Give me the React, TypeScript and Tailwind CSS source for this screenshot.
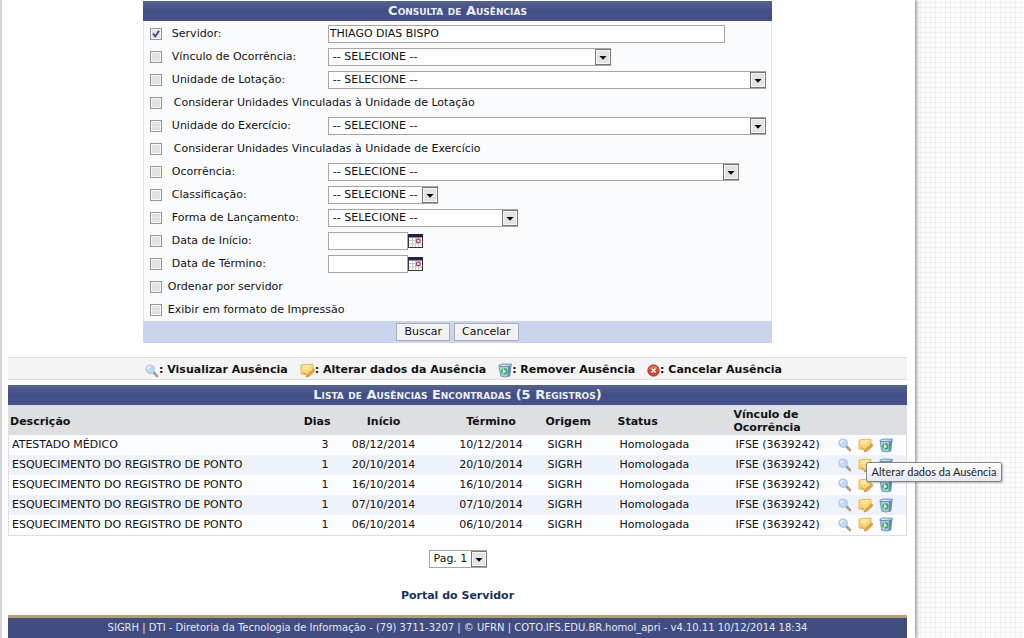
import { useState } from "react";
import type { ReactNode } from "react";

interface Option {
  id: string;
  label: string;
  field?: "text" | "select" | "date";
  width?: string;
  labelClass?: string;
}

const OPTIONS: Option[] = [
  { id: "servidor", label: "Servidor:", field: "text", width: "w-[397px]" },
  { id: "vinculo", label: "Vínculo de Ocorrência:", field: "select", width: "w-[283px]" },
  { id: "lotacao", label: "Unidade de Lotação:", field: "select", width: "w-[438px]" },
  { id: "vinc-lotacao", label: "Considerar Unidades Vinculadas à Unidade de Lotação", labelClass: "ml-3" },
  { id: "exercicio", label: "Unidade do Exercício:", field: "select", width: "w-[438px]" },
  { id: "vinc-exercicio", label: "Considerar Unidades Vinculadas à Unidade de Exercício", labelClass: "ml-3" },
  { id: "ocorrencia", label: "Ocorrência:", field: "select", width: "w-[411px]" },
  { id: "classificacao", label: "Classificação:", field: "select", width: "w-[110px]" },
  { id: "forma", label: "Forma de Lançamento:", field: "select", width: "w-[190px]" },
  { id: "inicio", label: "Data de Início:", field: "date" },
  { id: "termino", label: "Data de Término:", field: "date" },
  { id: "ordenar", label: "Ordenar por servidor", labelClass: "ml-1.5" },
  { id: "impressao", label: "Exibir em formato de Impressão", labelClass: "ml-1.5" },
];

const ABSENCES = [
  { description: "ATESTADO MÉDICO", days: 3, start: "08/12/2014", end: "10/12/2014" },
  { description: "ESQUECIMENTO DO REGISTRO DE PONTO", days: 1, start: "20/10/2014", end: "20/10/2014" },
  { description: "ESQUECIMENTO DO REGISTRO DE PONTO", days: 1, start: "16/10/2014", end: "16/10/2014" },
  { description: "ESQUECIMENTO DO REGISTRO DE PONTO", days: 1, start: "07/10/2014", end: "07/10/2014" },
  { description: "ESQUECIMENTO DO REGISTRO DE PONTO", days: 1, start: "06/10/2014", end: "06/10/2014" },
];

/* Icons */
function ViewIcon() {
  return (
    <svg width="14" height="14" viewBox="0 0 14 14" aria-hidden="true">
      <path d="M8.5 8.5 12 12" stroke="#b99a88" strokeWidth="2.6" strokeLinecap="round" />
      <path d="M8 8 9.4 9.4" stroke="#8b97ab" strokeWidth="2" />
      <circle cx="5.2" cy="5.2" r="4.2" fill="#bfdaf5" stroke="#b3c9e2" strokeWidth="1.2" />
      <path d="M2.8 5.2a2.6 2.6 0 0 1 2.6-2.6" stroke="#f4faff" strokeWidth="1.3" fill="none" />
    </svg>
  );
}

function EditIcon() {
  return (
    <svg width="15" height="15" viewBox="0 0 15 15" aria-hidden="true">
      <path d="M1 2 5 1.4 13 1.2v7L8.5 12.6 5 11.4 1 11z" fill="#f8d873" stroke="#e2b651" strokeWidth="0.9" />
      <path d="M2.5 3.2 11 2.8M2.5 5.4 9 5.2" stroke="#fff0b8" strokeWidth="1.2" />
      <path d="M14 5.8 8 10.6 6 14 9.6 12.9 14.6 8z" fill="#e9a93c" stroke="#b98a48" strokeWidth="0.7" />
      <path d="M3 9 6 11.5" stroke="#c99536" strokeWidth="1" />
    </svg>
  );
}

function RemoveIcon() {
  return (
    <svg width="14" height="15" viewBox="0 0 14 15" aria-hidden="true">
      <path d="M1 2.5 13 2 11.8 13 Q7 15.2 2.6 13z" fill="#a3cbe0" stroke="#648cae" strokeWidth="0.8" />
      <path d="M10 3 13 2.2 11.8 13 9.6 13.8z" fill="#5f8eb5" />
      <path d="M1 2.3 4 1 13.4 1.2 12.6 3 2 3.6z" fill="#d8e9f4" stroke="#527ca3" strokeWidth="0.8" />
      <circle cx="6.2" cy="8.4" r="2.4" fill="#d3f0d6" stroke="#2fa553" strokeWidth="1.5" strokeDasharray="4 1" />
    </svg>
  );
}

function CancelIcon() {
  return (
    <svg width="13" height="13" viewBox="0 0 13 13" aria-hidden="true">
      <circle cx="6.5" cy="6.5" r="5.7" fill="#cf4a33" stroke="#9c3626" strokeWidth="0.8" />
      <path d="M2.6 4.6Q6.5 0.8 10.4 4.6" stroke="#e88b76" strokeWidth="1.2" fill="none" />
      <path d="m4.5 4.5 4 4m0-4-4 4" stroke="#fff" strokeWidth="1.5" />
    </svg>
  );
}

function CalendarIcon() {
  return (
    <svg width="15" height="14" viewBox="0 0 15 14" aria-hidden="true">
      <rect x="0.5" y="0.5" width="14" height="13" fill="#fff" stroke="#3b3542" />
      <rect width="15" height="3.5" fill="#22223f" />
      <path d="M4.5 4v9M7.5 4v9M10.5 4v9M1 6.5h13M1 10h13" stroke="#c9c3cc" strokeWidth="1" />
      <rect x="8.7" y="5.2" width="3.3" height="3.3" fill="#fff" stroke="#b3404a" strokeWidth="1.2" />
    </svg>
  );
}

function Select({ id, label, text, width }: { id: string; label?: string; text: string; width: string }) {
  return (
    <span className={`relative inline-block h-[18px] ${width}`}>
      <select
        id={id}
        aria-label={label}
        className="block h-[18px] w-full appearance-none border border-[#a5a5a5] bg-white pl-1 text-[11px] leading-4 text-[#111]"
      >
        <option>{text}</option>
      </select>
      <svg className="pointer-events-none absolute top-px right-0" width="16" height="16" viewBox="0 0 16 16" aria-hidden="true">
        <rect x="0.5" y="0.5" width="15" height="15" fill="#e3e3e3" stroke="#777" />
        <rect x="1.5" y="1.5" width="13" height="13" fill="none" stroke="#f8f8f8" />
        <path d="M4.5 7h7L8 10.7z" fill="#000" />
      </svg>
    </span>
  );
}

function TitleBar({ children }: { children: ReactNode }) {
  return (
    <h2 className="h-5 bg-linear-to-b from-[#56628f] via-[#414e86] to-[#485288] text-center text-[13px] leading-5 font-bold text-[#eef0fa] [font-variant:small-caps]">
      {children}
    </h2>
  );
}

function OptionRow({ option }: { option: Option }) {
  const [checked, setChecked] = useState(option.id === "servidor");
  const checkId = `chk-${option.id}`;

  return (
    <div className="flex h-[23px] items-center pl-1.5">
      <input
        id={checkId}
        type="checkbox"
        aria-label={option.label}
        checked={checked}
        onChange={(e) => setChecked(e.target.checked)}
        className="peer size-3 shrink-0 appearance-none border border-[#969696] bg-[#e2e2e2] shadow-[inset_0_0_0_1px_#f6f6f6]"
      />
      <svg className="pointer-events-none invisible -ml-3 size-3 shrink-0 peer-checked:visible" viewBox="0 0 12 12" aria-hidden="true">
        <path d="m3 5.5 2.2 3L9 2.7" fill="none" stroke="#3d4a86" strokeWidth="1.8" />
      </svg>
      {option.field ? (
        <>
          <label htmlFor={option.id} className="ml-2.5 w-[156px] shrink-0 pt-0.5">{option.label}</label>
          {option.field === "select" && <Select id={option.id} text="-- SELECIONE --" width={option.width ?? "w-full"} />}
          {option.field === "text" && (
            <input id={option.id} type="text" defaultValue="THIAGO DIAS BISPO" className={`h-[18px] border border-[#a5a5a5] bg-white pl-px ${option.width}`} />
          )}
          {option.field === "date" && (
            <>
              <input id={option.id} type="text" className="h-[18px] w-20 border border-[#a5a5a5] bg-white px-0.5" />
              <button type="button" aria-label="Abrir calendário"><CalendarIcon /></button>
            </>
          )}
        </>
      ) : (
        <label htmlFor={checkId} className={`pt-0.5 ${option.labelClass}`}>{option.label}</label>
      )}
    </div>
  );
}

function Legend() {
  return (
    <ul className="mt-3.5 flex h-[23px] items-center justify-center gap-3 border-y border-[#dedede] bg-[#f4f4f4] pt-1 pl-3 font-bold">
      <li className="flex items-center"><ViewIcon />: Visualizar Ausência</li>
      <li className="flex items-center"><EditIcon />: Alterar dados da Ausência</li>
      <li className="flex items-center"><RemoveIcon />: Remover Ausência</li>
      <li className="flex items-center"><CancelIcon />: Cancelar Ausência</li>
    </ul>
  );
}

function AbsenceTable() {
  return (
    <section className="mt-[5px]">
      <TitleBar>Lista de Ausências Encontradas (5 Registros)</TitleBar>
      <table className="w-full table-fixed border-collapse border border-t-0 border-[#dcdee2] bg-[#fbfcfe]">
        <thead>
          <tr className="h-[29px] border-t-2 border-[#d5dbea] bg-[#dedfe3] text-left leading-[13px]">
            <th className="pl-px">Descrição</th>
            <th className="w-[60px] text-right">Dias</th>
            <th className="w-[106px] text-center">Início</th>
            <th className="w-[109px] text-center">Término</th>
            <th className="w-[72px]">Origem</th>
            <th className="w-[116px]">Status</th>
            <th className="w-[103px] pr-5">Vínculo de Ocorrência</th>
            <th className="w-[70px]"></th>
          </tr>
        </thead>
        <tbody>
          {ABSENCES.map((absence, i) => (
            <tr key={absence.start} className="h-5 leading-4 even:bg-[#edf2fb]">
              <td className="pl-[3px] whitespace-nowrap">{absence.description}</td>
              <td className="pr-0.5 text-right">{absence.days}</td>
              <td className="text-center">{absence.start}</td>
              <td className="text-center">{absence.end}</td>
              <td className="pl-0.5">SIGRH</td>
              <td className="pl-0.5">Homologada</td>
              <td className="pl-0.5 whitespace-nowrap">IFSE (3639242)</td>
              <td className="pl-px">
                <div className="flex items-center gap-1.5">
                  <button type="button" aria-label="Visualizar Ausência"><ViewIcon /></button>
                  <div className="relative flex">
                    <button type="button" aria-label="Alterar dados da Ausência"><EditIcon /></button>
                    {i === 1 && (
                      <div role="tooltip" className="absolute top-1 left-2 z-10 rounded-xs border border-[#858585] bg-linear-to-b from-white to-[#e6e7f0] px-[5px] font-[Lato,sans-serif] text-[11px] leading-[18px] whitespace-nowrap text-[#222] shadow-[1px_1px_2px_#0004]">
                        Alterar dados da Ausência
                      </div>
                    )}
                  </div>
                  <button type="button" aria-label="Remover Ausência"><RemoveIcon /></button>
                </div>
              </td>
            </tr>
          ))}
        </tbody>
      </table>
    </section>
  );
}

export default function App() {
  return (
    <div className="flex min-h-screen bg-[#fcfcfc] bg-[image:repeating-linear-gradient(0deg,#0000000a_0_1px,transparent_1px_5px),repeating-linear-gradient(90deg,#0000000a_0_1px,transparent_1px_5px)] pr-[109px] font-['DejaVu_Sans',Verdana,sans-serif] text-[11px] text-[#111]">
      <main className="flex flex-1 flex-col border-l-2 border-[#d5d5d8] bg-white px-1.5 pr-2 shadow-[2px_0_3px_#0005]">
        <form className="mx-auto mt-px w-[70%] min-w-[600px]" onSubmit={(e) => e.preventDefault()}>
          <TitleBar>Consulta de Ausências</TitleBar>
          <div className="border-x border-[#dee3ee] bg-[#fafbfd] pt-px">
            {OPTIONS.map((option) => (
              <OptionRow key={option.id} option={option} />
            ))}
          </div>
          <div className="flex h-[22px] items-center justify-center gap-1 bg-[#cad4ec]">
            <button type="submit" className="h-[18px] border border-[#a9adb8] bg-[#f2f2f3] px-[7px] leading-4">Buscar</button>
            <button type="button" className="h-[18px] border border-[#a9adb8] bg-[#f2f2f3] px-[7px] leading-4">Cancelar</button>
          </div>
        </form>

        <Legend />
        <AbsenceTable />

        <div className="mt-3.5 flex justify-center">
          <Select id="pagina" label="Página" text="Pag. 1" width="w-[58px]" />
        </div>
        <a href="#portal" className="mt-5 self-center leading-4 font-bold text-[#17335c]">Portal do Servidor</a>

        <footer className="mt-auto h-[23px] border-t-[3px] border-[#b3a078] bg-[#414c80] text-center text-[10px] leading-5 whitespace-nowrap text-[#e6e9f6]">
          SIGRH | DTI - Diretoria da Tecnologia de Informação - (79) 3711-3207 | © UFRN | COTO.IFS.EDU.BR.homol_apri - v4.10.11 10/12/2014 18:34
        </footer>
      </main>
    </div>
  );
}
